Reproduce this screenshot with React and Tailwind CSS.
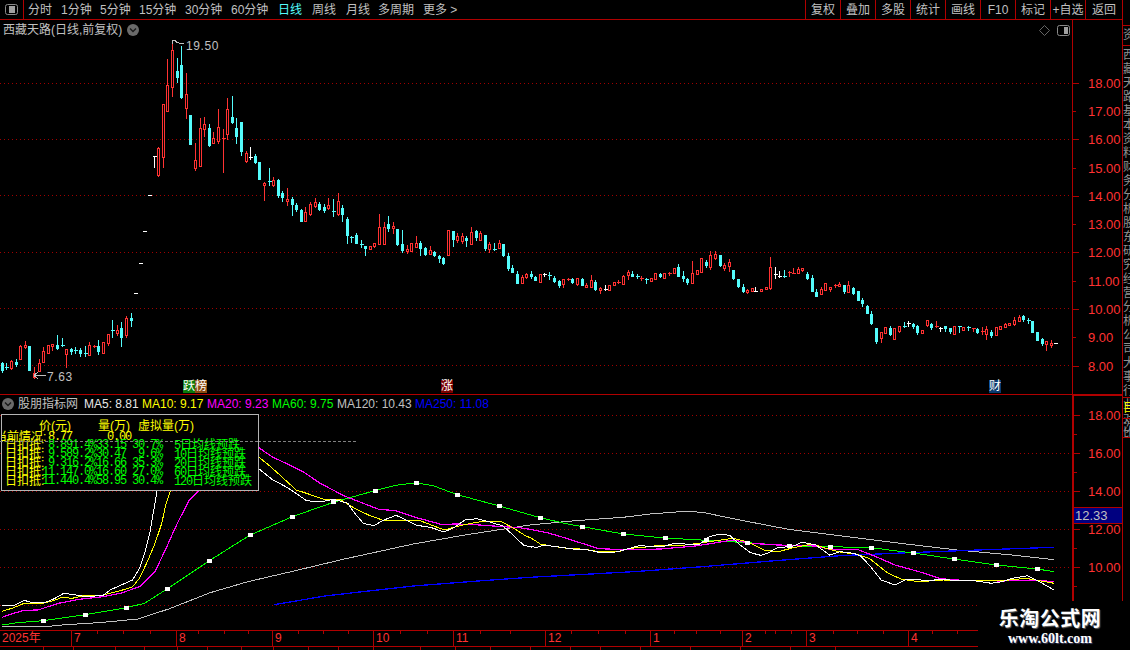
const FONT = { fontFamily: '"Liberation Sans","Noto Sans CJK SC",sans-serif' }
const MONO = { fontFamily: '"Liberation Mono","Noto Sans CJK SC",monospace' }

const seg = (ox, oy, text) =>
  text.trim().split('\n').map(l => {
    const [x, wt, bt, bb, wb, t] = l.trim().split(/\s+/)
    return {
      x: Math.floor(ox + x / 3),
      wt: Math.round(oy + wt / 3), bt: Math.round(oy + bt / 3),
      bb: Math.round(oy + bb / 3), wb: Math.round(oy + wb / 3), t,
    }
  })

const candles = [
  ...seg(0, 230, `8 397 400 420 426 c
18 400 412 414 417 c
34 390 394 414 417 r
49 388 396 402 408 c
61 346 349 386 388 r
76 334 346 351 354 r
88 348 348 420 420 c
103 412 428 440 445 r
118 388 400 422 424 r
130 352 364 395 396 r
145 346 346 368 369 r
157 342 343 349 360 r
172 315 346 354 358 c
187 324 346 347 348 c
199 358 358 371 411 r
214 354 357 362 372 c
226 351 359 362 369 c
241 354 360 369 378 c
256 348 369 372 378 c
268 337 346 374 375 r
282 346 348 350 351 r
295 330 348 362 372 c
310 336 337 368 369 r
325 312 313 338 344 r
337 270 300 302 321 c
352 285 301 309 316 r
364 276 294 320 348 c
379 258 264 316 321 r
394 249 264 270 288 c
405 190 190 190 190 w
420 99 99 99 99 w
432 3 3 3 3 w`),
  ...seg(0, 30, `447 496 496 496 496 w
462 377 377 377 410 w
475 350 354 436 437 r
490 222 223 380 410 r
502 87 166 242 242 r
517 40 61 170 197 r
532 85 124 140 155 c
544 48 105 202 204 c
559 130 193 235 264 r
571 254 256 342 342 c
586 340 391 413 420 r
601 265 295 407 407 r
613 262 283 296 318 r
628 282 294 346 348 c
640 306 325 339 339 r
655 237 292 332 339 r
670 297 324 328 426 r
682 205 238 312 328 r
697 198 262 276 280 c
709 264 294 318 340 c
724 276 276 363 375 c
739 364 370 393 396 r
751 351 380 381 386 w
766 373 378 396 399 c
778 395 396 446 446 c
793 455 459 464 510 r
808 414 453 456 465 c
820 442 451 465 467 r
835 448 450 496 500 c
847 482 489 500 513 c
862 474 508 512 525 r
877 502 507 521 555 c
889 518 526 537 542 c
904 538 541 572 572 c
916 532 547 572 572 r
931 515 522 552 554 r
946 505 517 527 530 r
958 517 522 537 540 c
973 522 531 540 546 c
985 505 526 534 537 r
1000 508 543 545 558 c
1015 490 514 552 554 r
1027 525 535 551 573 c`),
  ...seg(340, 200, `22 52 57 105 130 c
33 108 110 112 127 c
49 100 105 129 130 c
64 121 132 134 141 c
76 138 139 143 165 c
91 138 138 147 147 r
103 129 130 138 140 r
118 42 82 131 131 r
133 67 80 131 131 r
145 48 72 85 93 c
160 67 79 84 98 r
172 87 87 132 134 c
187 90 132 151 155 c
202 136 148 153 158 r
214 130 130 152 153 r
229 108 129 140 142 r
241 124 130 144 165 c
256 141 144 162 164 c
271 139 151 161 162 r
283 153 156 165 168 c
298 166 168 173 187 c
310 171 174 189 192 c
325 91 91 164 164 r
340 93 94 117 138 c
352 100 109 120 125 r
367 100 109 123 128 r
379 109 115 119 138 c
394 81 97 131 131 r
409 90 93 111 120 c
421 92 100 119 120 r
436 105 106 145 149 c
448 127 133 147 157 r
463 129 146 148 150 c
478 121 130 143 144 r
490 131 133 165 168 c
505 160 168 204 210 c
517 196 204 216 216 c
532 214 222 248 248 c
547 226 230 248 249 r
559 220 222 231 234 r
574 214 222 228 233 c
586 228 231 239 240 c
601 222 223 245 245 r
613 220 222 224 227 w
628 216 226 229 237 c
643 229 234 243 246 c
658 240 244 255 261 c
670 238 238 251 260 r
684 235 236 238 240 r
697 234 237 245 249 c
712 235 235 251 254 r
727 235 237 254 256 c
739 250 255 260 260 r
754 225 241 260 261 r
766 240 246 267 270 c
781 262 263 269 279 r
796 255 268 269 269 w
808 256 256 269 270 r
823 247 247 254 254 r
835 240 246 250 250 r
850 225 228 251 251 r
865 210 216 224 236 r
877 213 223 228 229 c
892 222 227 230 235 c
904 228 235 236 240 r
919 235 236 237 249 c
934 235 235 243 243 r
946 220 220 236 237 r
961 220 222 229 232 c
973 218 218 233 234 r
988 217 218 219 224 r
1003 203 205 218 220 r
1015 193 201 228 228 c
1030 213 228 233 243 c
1042 233 236 247 251 c
1057 183 220 248 248 r
1072 210 210 221 222 r
1084 175 175 215 215 r
1099 181 186 196 202 c
1111 153 165 201 207 r
1126 153 162 175 177 r
1141 165 165 196 198 c
1153 190 195 205 211 r
1168 178 187 197 213 r
1180 210 210 234 237 c
1195 237 237 258 261 c`),
  ...seg(740, 240, `9 132 141 153 155 c
22 148 149 156 160 r
37 145 145 152 152 r
47 141 152 153 154 w
64 147 148 152 152 r
79 141 141 146 147 r
91 51 81 144 147 r
106 81 102 104 114 w
118 94 109 110 111 w
133 90 109 110 111 c
148 94 95 100 108 r
160 85 98 99 99 r
175 82 88 98 99 r
187 84 85 90 93 r
202 96 103 114 117 c
217 106 114 152 152 c
229 148 156 167 167 c
244 142 148 161 162 r
256 129 130 149 150 r
271 141 142 147 152 r
286 131 135 137 141 r
298 127 132 137 138 r
313 135 135 153 159 c
325 123 135 155 156 r
340 141 144 159 161 c
355 153 153 179 180 c
367 174 180 189 198 c
382 195 198 218 219 c
394 213 222 249 252 c
409 264 264 303 309 c
424 276 277 293 305 r
436 262 262 279 279 r
451 258 264 283 286 c
463 264 265 296 297 r
478 258 259 273 275 r
493 247 259 261 261 c
505 243 250 251 258 w
520 248 252 258 263 c
532 256 258 276 282 c
547 271 271 278 278 r
562 240 241 255 257 r
574 248 252 261 267 c
589 243 259 260 261 r
601 262 263 264 274 w
616 259 259 263 273 c
631 263 263 273 279 c
643 259 259 281 282 r
658 258 258 262 275 c
670 262 262 269 270 r
685 259 262 263 270 c
700 263 264 265 274 r
712 264 267 276 279 c
727 262 273 277 283 r
739 259 267 281 296 r
754 271 277 285 291 c
769 262 262 284 285 r
781 259 259 266 267 r
796 250 252 260 262 r
808 250 250 254 254 r
823 232 240 253 254 r
838 226 232 242 244 r
850 226 228 237 242 c
865 235 239 240 248 c
877 243 243 275 276 c
892 277 277 300 301 c
907 294 297 309 315 c
919 304 304 312 329 r
934 301 309 315 320 r
946 310 310 310 310 w`),
]

const COL = { c: '#54fcfc', r: '#ff3232', w: '#ffffff' }

const Candle = ({ x, wt, bt, bb, wb, t }) => {
  const color = COL[t]
  const c = x + 0.5
  const thin = bb - bt <= 1
  return (
    <g stroke={color} fill="none">
      <line x1={c} x2={c} y1={wt} y2={wb + 1} />
      {thin ? (
        <line x1={c - 2} x2={c + 2} y1={bt + 0.5} y2={bt + 0.5} />
      ) : t === 'r' ? (
        <rect x={c - 1} y={bt + 0.5} width={2} height={bb - bt} fill="#000" />
      ) : (
        <rect x={c - 1} y={bt + 0.5} width={2} height={bb - bt} fill={color} />
      )}
    </g>
  )
}

// points read off the zooms: sx 2.904, sy 3
const pts = (ox, oy, s) =>
  s.trim().split(/\s+/).map(p => {
    const [x, y] = p.split(',')
    return `${(ox + x / 2.904).toFixed(1)},${(oy + y / 3).toFixed(1)}`
  })

const curve = (a, b) => [...pts(0, 440, a), ...pts(530, 490, b)].join(' ')

const ma5 = curve(
  '6,498 40,497 70,481 90,487 130,488 160,475 185,460 215,464 250,470 300,466 320,450 350,436 385,420 405,385 420,340 435,280 445,220 455,160 465,100 750,85 790,118 830,140 860,160 890,182 930,186 970,178 1010,190 1030,220 1055,250 1085,257 1115,240 1150,226 1180,240 1210,256 1250,262 1290,276 1320,262 1350,240 1385,236 1420,245 1460,258 1490,285 1520,315 1545,322',
  '0,170 20,172 40,165 90,172 130,178 160,178 200,187 250,186 290,175 320,166 345,170 385,170 420,160 450,162 490,165 520,140 550,133 580,136 610,165 640,188 670,196 690,190 720,172 760,170 790,157 830,165 870,195 900,185 940,190 960,198 985,225 1020,270 1060,285 1090,270 1120,268 1150,272 1200,268 1240,272 1290,272 1340,280 1370,275 1400,265 1445,257 1480,275 1522,300'
)
const ma10 = curve(
  '6,514 40,503 70,490 130,489 160,480 180,472 210,475 250,465 300,465 350,452 385,440 405,415 430,360 450,310 470,250 480,200 495,150 750,50 780,75 820,112 860,150 890,160 940,178 990,180 1030,205 1070,225 1110,240 1220,242 1290,270 1340,256 1390,246 1455,244 1500,270 1530,290',
  '0,142 30,162 60,168 100,174 160,178 200,185 260,184 290,175 330,172 385,165 450,165 490,160 540,152 590,145 630,155 680,180 720,185 770,172 820,162 860,175 900,186 950,193 985,205 1040,250 1080,268 1130,275 1200,270 1300,272 1370,272 1440,265 1480,272 1522,280'
)
const ma20 = curve(
  '6,532 40,520 70,511 110,510 170,490 230,478 300,470 350,460 405,440 450,395 480,330 515,250 550,180 590,140 750,22 790,50 830,70 880,95 930,130 1000,168 1100,208 1150,212 1200,230 1280,253 1330,252 1380,254 1460,260 1500,262',
  '0,118 50,128 100,143 160,163 200,176 280,179 380,177 480,168 590,150 640,160 720,165 830,168 870,178 950,178 1000,198 1060,225 1130,245 1190,265 1230,270 1370,273 1460,270 1522,275'
)
const ma60 = curve(
  '6,555 50,548 126,542 248,524 367,503 420,490 486,446 608,362 680,315 727,285 849,230 968,187 1088,152 1150,136 1209,128 1260,138 1328,164 1450,198',
  '30,83 100,100 152,110 271,132 391,144 512,151 631,158 752,167 872,170 991,173 1112,189 1232,207 1354,225 1473,237 1522,245'
)
const ma120 = curve(
  '6,558 150,558 180,555 300,547 400,537 490,507 610,458 720,425 850,394 1000,357 1200,312 1350,285',
  '0,105 130,92 270,82 350,72 450,64 500,67 620,92 750,118 900,137 1060,158 1240,180 1400,195 1522,209'
)
const ma250 = curve(
  '795,494 950,467 1200,438 1400,422',
  '0,262 300,245 500,230 700,213 900,197 1100,188 1300,180 1522,172'
)

const markers = [
  ...pts(0, 440, '126,542 248,524 367,503 486,446 608,362 727,285 849,230 968,187 1088,152 1209,128 1328,164 1450,198 1568,233'),
  ...pts(530, 490, '152,110 271,132 391,144 512,151 631,158 752,167 872,170 991,173 1112,189 1232,207 1354,225 1473,237'),
].map(p => p.split(',').map(Number))

const LEFT_TABS = [
  ['分时', 33], ['1分钟', 39], ['5分钟', 39], ['15分钟', 46], ['30分钟', 46], ['60分钟', 47],
  ['日线', 34, true], ['周线', 34], ['月线', 32], ['多周期', 45], ['更多 >', 34],
]
const RIGHT_TABS = ['复权', '叠加', '多股', '统计', '画线', 'F10', '标记', '+自选', '返回']

const LEGEND = [
  ['MA5: 8.81', 'text-[#e8e8e8]', 58],
  ['MA10: 9.17', 'text-[#ffff00]', 65],
  ['MA20: 9.23', 'text-[#ff00ff]', 65],
  ['MA60: 9.75', 'text-[#00ff00]', 65],
  ['MA120: 10.43', 'text-[#c0c0c0]', 78],
  ['MA250: 11.08', 'text-[#0000ff]', 80],
]

const ROWS = [
  ['8.891.4%33.15 30.7%', '5', '日均线预跌'],
  ['9.589.2%30.47  9.6%', '10', '日均线预跌'],
  ['9.316.2%16.66 35.3%', '20', '日均线预跌'],
  ['11.147.0%16.60 27.0%', '60', '日均线预跌'],
  ['11.440.4%58.95 30.4%', '120', '日均线预跌'],
]

const MONTHS = [
  ['2025年', 71], ['7', 105], ['8', 96], ['9', 101], ['10', 80], ['11', 92], ['12', 105],
  ['1', 92], ['2', 64], ['3', 102], ['4', 164],
]
const MINOR = [97, 123, 150, 198, 224, 248, 298, 323, 348, 400, 427, 480, 510, 571, 598, 625, 674, 696, 720, 765, 775, 791, 833, 857, 883, 932, 957]
const BOTTOM_TICKS = [43, 73, 115, 144, 177, 207, 241, 273, 308, 338, 373, 420, 455, 490, 530, 570, 600, 640, 690, 740, 790, 835]

const GRID_TOP = [83, 139, 195, 252, 308, 365]
const GRID_LOW = [415, 453, 491, 529, 567, 605]

const Chevron = () => (
  <svg width="12" height="12" viewBox="0 0 12 12" className="shrink-0">
    <circle cx="6" cy="6" r="6" fill="#6a6a6a" />
    <path d="M3 4.5 L6 7.5 L9 4.5" stroke="#1a1a1a" strokeWidth="1.4" fill="none" />
  </svg>
)

// one pixel every 4px, a dash array drifts under crispEdges
const Grid = ({ id, ys }) => (
  <>
    <defs>
      <pattern id={id} width="4" height="1" patternUnits="userSpaceOnUse" y="0">
        <rect width="1" height="1" fill="#a00000" />
      </pattern>
    </defs>
    {ys.map(y => <rect key={y} x="0" y={y} width="1072" height="1" fill={`url(#${id})`} />)}
  </>
)

const Badge = ({ cls, children }) => (
  <span className={`inline-block h-[13px] w-[12px] text-center text-[12px] leading-[13px] text-white ${cls}`}>{children}</span>
)

const App = () => (
  <div className="relative flex h-[650px] w-[1130px] overflow-hidden bg-black" style={FONT}>
    <div className="flex w-[1123px] shrink-0 flex-col border-r border-[#b00000]">
      {/* toolbar */}
      <div className="flex h-5 shrink-0 items-center border-b border-[#b00000] text-[12px] leading-none text-[#c0c0c0]">
        <div className="flex h-full w-6 shrink-0 items-center justify-center border-r border-[#b00000]">
          <svg width="13" height="11" viewBox="0 0 13 11">
            <rect x="0.5" y="0.5" width="12" height="10" rx="2" fill="none" stroke="#8a8a8a" />
            <rect x="4" y="2" width="6" height="7" fill="#a0a0a0" />
          </svg>
        </div>
        <div className="flex pl-1">
          {LEFT_TABS.map(([t, w, active]) => (
            <span key={t} style={{ width: w }} className={`whitespace-nowrap ${active ? 'text-[#54fcfc]' : ''}`}>{t}</span>
          ))}
        </div>
        <div className="ml-auto flex h-full">
          {RIGHT_TABS.map((t, i) => (
            <span key={t} className={`flex h-full items-center justify-center whitespace-nowrap border-l border-[#b00000] ${i === 8 ? 'w-[37px]' : 'w-[35px]'}`}>{t}</span>
          ))}
        </div>
      </div>

      <div className="flex min-h-0 flex-1">
        <div className="flex w-[1072px] shrink-0 flex-col">
          {/* price pane */}
          <div className="relative h-[375px] shrink-0 border-b border-[#b00000]">
            <svg width="1072" height="374" viewBox="0 20 1072 374" shapeRendering="crispEdges" className="block">
              <Grid id="dotsTop" ys={GRID_TOP} />
              {candles.map((c, i) => <Candle key={i} {...c} />)}
              <path d="M172 44 V40.5 H175 L177 42.5 L184 44" stroke="#c0c0c0" fill="none" />
              <text x="186" y="50" fill="#c0c0c0" fontSize="12" letterSpacing="0.6" shapeRendering="auto">19.50</text>
              <path d="M34 375.5 H46 M34 375.5 L38 372 M34 375.5 L38 379" stroke="#c0c0c0" fill="none" />
              <text x="47" y="381" fill="#c0c0c0" fontSize="12" letterSpacing="0.6" shapeRendering="auto">7.63</text>
            </svg>
            <div className="absolute left-[3px] top-[2px] flex items-center gap-[5px] text-[12px] leading-[16px] text-[#c0c0c0]">
              <span className="whitespace-nowrap">西藏天路(日线,前复权)</span>
              <Chevron />
            </div>
            <div className="absolute left-[1039px] top-[5px] flex items-center gap-[7px]">
              <svg width="11" height="11" viewBox="0 0 11 11">
                <path d="M5.5 0.5 L10.5 5.5 L5.5 10.5 L0.5 5.5 Z" fill="none" stroke="#666" />
              </svg>
              <svg width="13" height="11" viewBox="0 0 13 11">
                <rect x="0.5" y="0.5" width="12" height="10" rx="2" fill="none" stroke="#8a8a8a" />
                <rect x="7" y="2" width="4" height="7" fill="#a0a0a0" />
              </svg>
            </div>
            <div className="absolute left-[183px] top-[360px] flex"><Badge cls="bg-[#0a7a0a]">跃</Badge><Badge cls="bg-[#8a4a10]">榜</Badge></div>
            <div className="absolute left-[441px] top-[360px] flex"><Badge cls="bg-[#7a0000]">涨</Badge></div>
            <div className="absolute left-[989px] top-[360px] flex"><Badge cls="bg-[#0a3a6e]">财</Badge></div>
          </div>

          {/* indicator pane */}
          <div className="relative h-[235px] shrink-0">
            <svg width="1072" height="235" viewBox="0 395 1072 235" shapeRendering="crispEdges" className="block">
              <Grid id="dotsLow" ys={GRID_LOW} />
              <line x1="258" x2="358" y1="441.5" y2="441.5" stroke="#808080" strokeDasharray="3 2" />
              <polyline points={ma120} fill="none" stroke="#c0c0c0" />
              <polyline points={ma250} fill="none" stroke="#0000ff" strokeWidth="1.3" />
              <polyline points={ma60} fill="none" stroke="#00ff00" />
              <polyline points={ma20} fill="none" stroke="#ff00ff" strokeWidth="1.2" />
              <polyline points={ma10} fill="none" stroke="#ffff00" />
              <polyline points={ma5} fill="none" stroke="#ffffff" />
              {markers.map(([x, y], i) => <rect key={i} x={Math.round(x) - 2} y={Math.round(y) - 2} width="5" height="4" fill="#fff" />)}
            </svg>
            <div className="absolute left-[2px] top-[1px] flex h-[15px] items-center text-[12px] leading-none">
              <Chevron />
              <span className="ml-[4px] w-[66px] whitespace-nowrap text-[#c0c0c0]">股朋指标网</span>
              {LEGEND.map(([t, c, w]) => (
                <span key={t} style={{ width: w }} className={`whitespace-nowrap ${c}`}>{t}</span>
              ))}
            </div>
            {/* stats box */}
            <div className="absolute left-[1px] top-[19px] h-[77px] w-[258px] overflow-hidden border border-[#b4b4b4] bg-black pt-[4px] text-[12px]">
              <div className="flex h-[12px] pt-px leading-[12px] text-[#ffff00]">
                <span className="ml-[37px] w-[59px]">价(元)</span>
                <span className="w-[40px]">量(万)</span>
                <span>虚拟量(万)</span>
              </div>
              <div className="flex h-[10px] leading-[12px] text-[#ffff00]">
                <span className="ml-[-7px] w-[53px] whitespace-nowrap">当前情况:</span>
                <span className="w-[59px] tracking-[-1.2px]" style={MONO}>8.77</span>
                <span className="tracking-[-1.2px]" style={MONO}>0.00</span>
              </div>
              {ROWS.map(([nums, n, label]) => (
                <div key={n} className="flex h-[9px] leading-[9px]">
                  <span className="w-[37px] shrink-0 whitespace-nowrap pl-[3px] text-[#ffff00]">日扣抵:</span>
                  <span className="w-[123px] shrink-0 whitespace-pre text-right tracking-[-1.2px] text-[#00ff00]" style={MONO}>{nums}</span>
                  <span className="ml-[12px] whitespace-nowrap text-[#00ff00]"><span className="tracking-[-1.2px]" style={MONO}>{n}</span>{label}</span>
                </div>
              ))}
            </div>
            <div className="absolute left-0 top-[46px] h-px w-[258px] border-t border-dashed border-[#808080]" />
          </div>

          {/* time axis */}
          <div className="relative flex h-[17px] shrink-0 border-y border-[#b00000] text-[12px] leading-[15px] text-[#ff3232]">
            {MONTHS.map(([m, w], i) => (
              <span key={m} style={{ width: w }} className={`whitespace-nowrap pl-[2px] ${i ? 'border-l border-[#b00000]' : ''}`}>{m}</span>
            ))}
            <svg width="1072" height="3" className="absolute left-0 top-0" shapeRendering="crispEdges">
              {MINOR.map(x => <line key={x} x1={x + 0.5} x2={x + 0.5} y1="0" y2="3" stroke="#b00000" />)}
            </svg>
          </div>
          <svg width="1072" height="3" className="block shrink-0" shapeRendering="crispEdges">
            {BOTTOM_TICKS.map(x => <line key={x} x1={x + 0.5} x2={x + 0.5} y1="0" y2="3" stroke="#b00000" />)}
          </svg>
        </div>

        {/* price axis */}
        <div className="flex min-w-0 flex-1 flex-col border-l border-[#b00000] text-[13px] leading-none text-[#ff3232]">
          <div className="h-[375px] shrink-0 border-b border-[#b00000] pt-[49px]">
            {[18, 17, 16, 15, 14, 13, 12, 11, 10, 9, 8].map(v => (
              <div key={v} className="flex h-[28.3px] items-center">
                <span className={`h-px shrink-0 bg-[#b00000] ${v % 2 === 0 ? 'w-[6px]' : 'w-[3px]'}`} />
                <span className={`whitespace-nowrap ${v % 2 === 0 ? 'ml-[9px]' : 'ml-[12px]'}`}>{v}.00</span>
              </div>
            ))}
          </div>
          <div className="relative flex-1 border-l border-t border-[#b00000] pt-[10px]">
            {[18, 17, 16, 15, 14, 13, 12, 11, 10, 9].map(v => (
              <div key={v} className="flex h-[19px] items-center">
                <span className={`h-px shrink-0 bg-[#b00000] ${v % 2 === 0 ? 'w-[6px]' : 'w-[3px]'}`} />
                {v % 2 === 0 && <span className="ml-[8px] whitespace-nowrap">{v}.00</span>}
              </div>
            ))}
            <div className="absolute left-0 right-0 top-[111px] flex h-[17px] items-center border-y border-[#b00000] bg-[#000080] pl-px text-[#c0c0c0]">12.33</div>
          </div>
        </div>
      </div>
    </div>

    {/* clipped side panel */}
    <div className="flex w-[7px] shrink-0 flex-col overflow-hidden text-[12px] leading-[14px] text-[#909090]">
      <div className="h-[25px] shrink-0" />
      <div className="h-[20px] shrink-0 border-t border-[#b00000] pt-[2px]"><div className="w-[13px]">资</div></div>
      <div className="h-[352px] shrink-0 border-t border-[#b00000] pt-[2px]">
        <div className="w-[13px] break-all">西藏天路基本资料财务分析股东研究经营分析公司大事行业对比</div>
      </div>
      <div className="h-[21px] shrink-0 border-t border-[#b00000] pt-[3px] text-[#ffff00]"><div className="w-[13px]">目</div></div>
      <div className="h-[19px] shrink-0 border-t border-[#b00000] pt-[2px]"><div className="w-[13px]">次</div></div>
      <div className="flex-1 border-t border-[#b00000]" />
    </div>

    {/* watermark */}
    <div className="absolute left-[978px] top-[601px] flex h-[49px] w-[152px] flex-col items-center bg-black pr-[8px] pt-[7px] text-white">
      <span className="text-[20px] font-bold leading-[22px] tracking-[0.5px] [text-shadow:1px_1px_1px_#666]">乐淘公式网</span>
      <span className="mt-[1px] text-[14px] font-bold leading-[15px] [text-shadow:1px_1px_1px_#446]" style={{ fontFamily: '"Liberation Serif",serif' }}>www.60lt.com</span>
    </div>
  </div>
)

export default App
